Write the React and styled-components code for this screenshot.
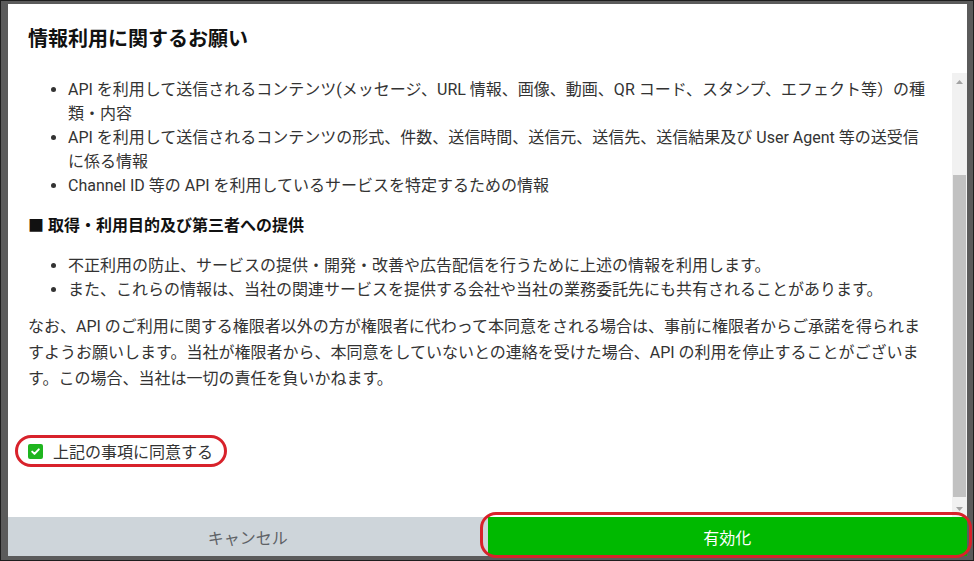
import React from 'react';
import styled, { createGlobalStyle } from 'styled-components';

const GlobalStyle = createGlobalStyle`
    body {
        margin: 0;
        font-family: Roboto, "Noto Sans CJK JP", sans-serif;
        background: #5b5b5b;
    }
`;

const Backdrop = styled.div`
    box-sizing: border-box;
    width: 974px;
    height: 561px;
    border: 1px solid #1e1e1e;
    padding: 3px 6px 4px 7px;
    background: #5b5b5b;
    display: flex;
`;

const Modal = styled.div`
    flex: 1;
    display: flex;
    flex-direction: column;
    background: #fff;
`;

const Header = styled.div`
    height: 69px;
    box-sizing: border-box;
    padding: 21px 20px 0;
`;

const Title = styled.h2`
    margin: 0;
    font-size: 20px;
    line-height: 28px;
    font-weight: bold;
    color: #111;
`;

const Body = styled.div`
    flex: 1;
    display: flex;
    min-height: 0;
`;

const Content = styled.div`
    flex: 1;
    padding: 5px 20px 0;
    color: #333;
    font-size: 16px;
`;

const List = styled.ul`
    margin: 0;
    padding-left: 40px;
    line-height: 24px;
`;

const Section = styled.h3`
    margin: 16px 0;
    font-size: 16px;
    line-height: 24px;
    font-weight: bold;
    color: #111;
`;

const Note = styled.p`
    margin: 12px 0 0;
    line-height: 26px;
`;

const Agree = styled.label`
    position: relative;
    display: inline-flex;
    align-items: center;
    gap: 10px;
    margin-top: 47px;
    height: 24px;
    font-size: 16px;
    color: #333;

    /* red annotation round the check */
    &::after {
        content: "";
        position: absolute;
        top: -4px;
        bottom: -4px;
        left: -13px;
        right: -14px;
        border: 3px solid #d8222b;
        border-radius: 16px;
    }
`;

const Scrollbar = styled.div`
    width: 15px;
    display: flex;
    flex-direction: column;
    background: #f1f1f1;
`;

const Arrow = styled.div`
    height: 17px;
    display: flex;
    align-items: center;
    justify-content: center;
`;

const Track = styled.div`
    flex: 1;
`;

const Thumb = styled.div`
    margin: 85px 1px 0;
    height: 322px;
    background: #c1c1c1;
`;

const Footer = styled.div`
    height: 39px;
    display: flex;
`;

const FooterButton = styled.button`
    position: relative;
    flex: 1;
    border: none;
    margin: 0;
    padding: 0;
    font-family: inherit;
    font-size: 16px;
    background: ${props => props.primary ? '#00b900' : '#ced5da'};
    color: ${props => props.primary ? '#fff' : '#5e6266'};

    ${props => props.marked && `
        &::after {
            content: "";
            position: absolute;
            top: -5px;
            bottom: -2px;
            left: -8px;
            right: -5px;
            border: 3px solid #d8222b;
            border-radius: 16px;
        }
    `}
`;

const CheckIcon = () => (
    <svg width="15" height="15" viewBox="0 0 15 15">
        <rect x="0" y="0" width="15" height="15" rx="2" fill="#1fb51f" />
        <path d="M4.2 7.6 L6.5 9.9 L10.8 5.4" stroke="#fff" strokeWidth="2" fill="none" strokeLinecap="round" strokeLinejoin="round" />
    </svg>
);

const ArrowIcon = ({ down }) => (
    <svg width="7" height="4" viewBox="0 0 7 4">
        <path d={down ? "M0 0 L7 0 L3.5 4 Z" : "M0 4 L7 4 L3.5 0 Z"} fill="#a3a3a3" />
    </svg>
);

export default function App() {
    return (
        <Backdrop>
            <GlobalStyle />
            <Modal>
                <Header>
                    <Title>情報利用に関するお願い</Title>
                </Header>
                <Body>
                    <Content>
                        <List>
                            <li>API を利用して送信されるコンテンツ(メッセージ、URL 情報、画像、動画、QR コード、スタンプ、エフェクト等）の種類・内容</li>
                            <li>API を利用して送信されるコンテンツの形式、件数、送信時間、送信元、送信先、送信結果及び User Agent 等の送受信に係る情報</li>
                            <li>Channel ID 等の API を利用しているサービスを特定するための情報</li>
                        </List>
                        <Section>■ 取得・利用目的及び第三者への提供</Section>
                        <List>
                            <li>不正利用の防止、サービスの提供・開発・改善や広告配信を行うために上述の情報を利用します。</li>
                            <li>また、これらの情報は、当社の関連サービスを提供する会社や当社の業務委託先にも共有されることがあります。</li>
                        </List>
                        <Note>
                            なお、API のご利用に関する権限者以外の方が権限者に代わって本同意をされる場合は、事前に権限者からご承諾を得られますようお願いします。当社が権限者から、本同意をしていないとの連絡を受けた場合、API の利用を停止することがございます。この場合、当社は一切の責任を負いかねます。
                        </Note>
                        <Agree>
                            <CheckIcon />
                            上記の事項に同意する
                        </Agree>
                    </Content>
                    <Scrollbar>
                        <Arrow><ArrowIcon /></Arrow>
                        <Track><Thumb /></Track>
                        <Arrow><ArrowIcon down /></Arrow>
                    </Scrollbar>
                </Body>
                <Footer>
                    <FooterButton>キャンセル</FooterButton>
                    <FooterButton primary marked>有効化</FooterButton>
                </Footer>
            </Modal>
        </Backdrop>
    );
}
